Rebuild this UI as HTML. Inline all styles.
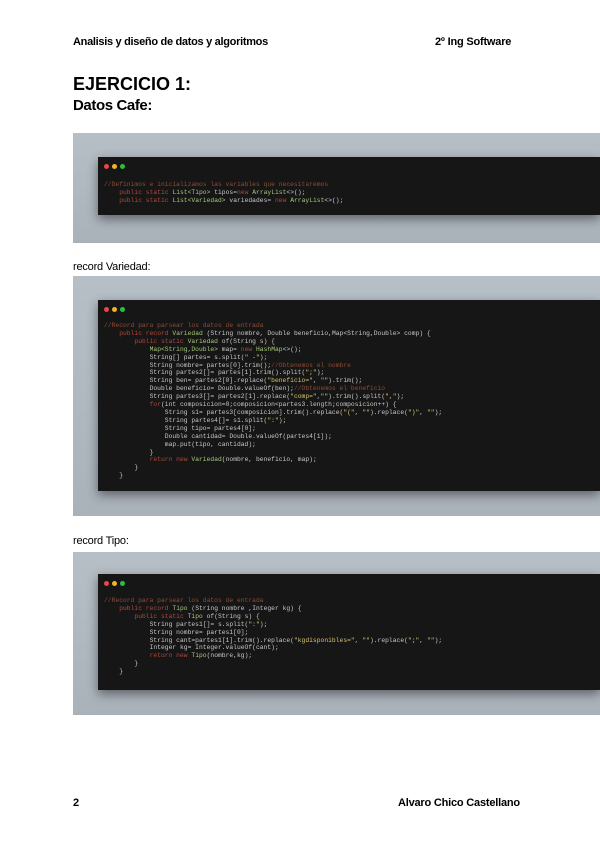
<!DOCTYPE html>
<html><head><meta charset="utf-8"><style>
*{margin:0;padding:0;box-sizing:border-box}
body{width:600px;height:848px;background:#fff;position:relative;overflow:hidden;font-family:"Liberation Sans",sans-serif;color:#000}
.a{position:absolute;white-space:nowrap}
.panel{position:absolute;left:73px;right:0;background:linear-gradient(#b6bec6,#a9b1b9);}
.card{position:absolute;left:25px;right:0;background:#161616;box-shadow:0 4px 10px rgba(0,0,0,.45)}
.dots{position:absolute;left:6px;top:7px;font-size:0;line-height:0}
.dots i{display:inline-block;width:5px;height:5px;border-radius:50%;margin-right:3px}
pre{position:absolute;left:6px;font-family:"Liberation Mono",monospace;font-size:6.3px;line-height:7.9px;color:#c8c8c8;letter-spacing:0.02px}
.c{color:#8e4c34}.k{color:#b0483a}.t{color:#a7c77a}.s{color:#d9c56a}
</style></head><body>
<div class="a" style="left:73px;top:36px;font-size:11px;font-weight:bold;letter-spacing:-0.3px">Analisis y diseño de datos y algoritmos</div>
<div class="a" style="left:435px;top:36px;font-size:11px;font-weight:bold;letter-spacing:-0.2px">2º Ing Software</div>
<div class="a" style="left:73px;top:74px;font-size:18px;font-weight:bold">EJERCICIO 1:</div>
<div class="a" style="left:73px;top:97px;font-size:15px;font-weight:bold;letter-spacing:-0.4px">Datos Cafe:</div>

<div class="panel" style="top:133px;height:110px">
<div class="card" style="top:24px;height:58px">
<div class="dots"><i style="background:#e9473f"></i><i style="background:#f2b22a"></i><i style="background:#2cbf3a"></i></div>
<pre style="top:24px"><span class="c">//Definimos e inicializamos las variables que necesitaremos</span>
    <span class="k">public static</span> <span class="t">List&lt;Tipo&gt;</span> tipos=<span class="k">new</span> <span class="t">ArrayList</span>&lt;&gt;();
    <span class="k">public static</span> <span class="t">List&lt;Variedad&gt;</span> variedades= <span class="k">new</span> <span class="t">ArrayList</span>&lt;&gt;();</pre>
</div></div>

<div class="a" style="left:73px;top:261px;font-size:11px;letter-spacing:-0.2px">record Variedad:</div>
<div class="panel" style="top:276px;height:240px">
<div class="card" style="top:24px;height:191px">
<div class="dots"><i style="background:#e9473f"></i><i style="background:#f2b22a"></i><i style="background:#2cbf3a"></i></div>
<pre style="top:22px"><span class="c">//Record para parsear los datos de entrada</span>
    <span class="k">public record</span> <span class="t">Variedad</span> (String nombre, Double beneficio,Map&lt;String,Double&gt; comp) {
        <span class="k">public static</span> <span class="t">Variedad</span> of(String s) {
            <span class="t">Map&lt;String,Double&gt;</span> map= <span class="k">new</span> <span class="t">HashMap</span>&lt;&gt;();
            String[] partes= s.split(<span class="s">" -"</span>);
            String nombre= partes[0].trim();<span class="c">//Obtenemos el nombre</span>
            String partes2[]= partes[1].trim().split(<span class="s">";"</span>);
            String ben= partes2[0].replace(<span class="s">"beneficio="</span>, <span class="s">""</span>).trim();
            Double beneficio= Double.valueOf(ben);<span class="c">//Obtenemos el beneficio</span>
            String partes3[]= partes2[1].replace(<span class="s">"comp="</span>,<span class="s">""</span>).trim().split(<span class="s">","</span>);
            <span class="k">for</span>(int composicion=0;composicion&lt;partes3.length;composicion++) {
                String s1= partes3[composicion].trim().replace(<span class="s">"("</span>, <span class="s">""</span>).replace(<span class="s">")"</span>, <span class="s">""</span>);
                String partes4[]= s1.split(<span class="s">":"</span>);
                String tipo= partes4[0];
                Double cantidad= Double.valueOf(partes4[1]);
                map.put(tipo, cantidad);
            }
            <span class="k">return new</span> <span class="t">Variedad</span>(nombre, beneficio, map);
        }
    }</pre>
</div></div>

<div class="a" style="left:73px;top:535px;font-size:11px;letter-spacing:-0.2px">record Tipo:</div>
<div class="panel" style="top:552px;height:163px">
<div class="card" style="top:22px;height:116px">
<div class="dots"><i style="background:#e9473f"></i><i style="background:#f2b22a"></i><i style="background:#2cbf3a"></i></div>
<pre style="top:23px"><span class="c">//Record para parsear los datos de entrada</span>
    <span class="k">public record</span> <span class="t">Tipo</span> (String nombre ,Integer kg) {
        <span class="k">public static</span> <span class="t">Tipo</span> of(String s) {
            String partes1[]= s.split(<span class="s">":"</span>);
            String nombre= partes1[0];
            String cant=partes1[1].trim().replace(<span class="s">"kgdisponibles="</span>, <span class="s">""</span>).replace(<span class="s">";"</span>, <span class="s">""</span>);
            Integer kg= Integer.valueOf(cant);
            <span class="k">return new</span> <span class="t">Tipo</span>(nombre,kg);
        }
    }</pre>
</div></div>

<div class="a" style="left:73px;top:797px;font-size:11px;font-weight:bold">2</div>
<div class="a" style="left:398px;top:797px;font-size:11px;font-weight:bold;letter-spacing:-0.2px">Alvaro Chico Castellano</div>
</body></html>
